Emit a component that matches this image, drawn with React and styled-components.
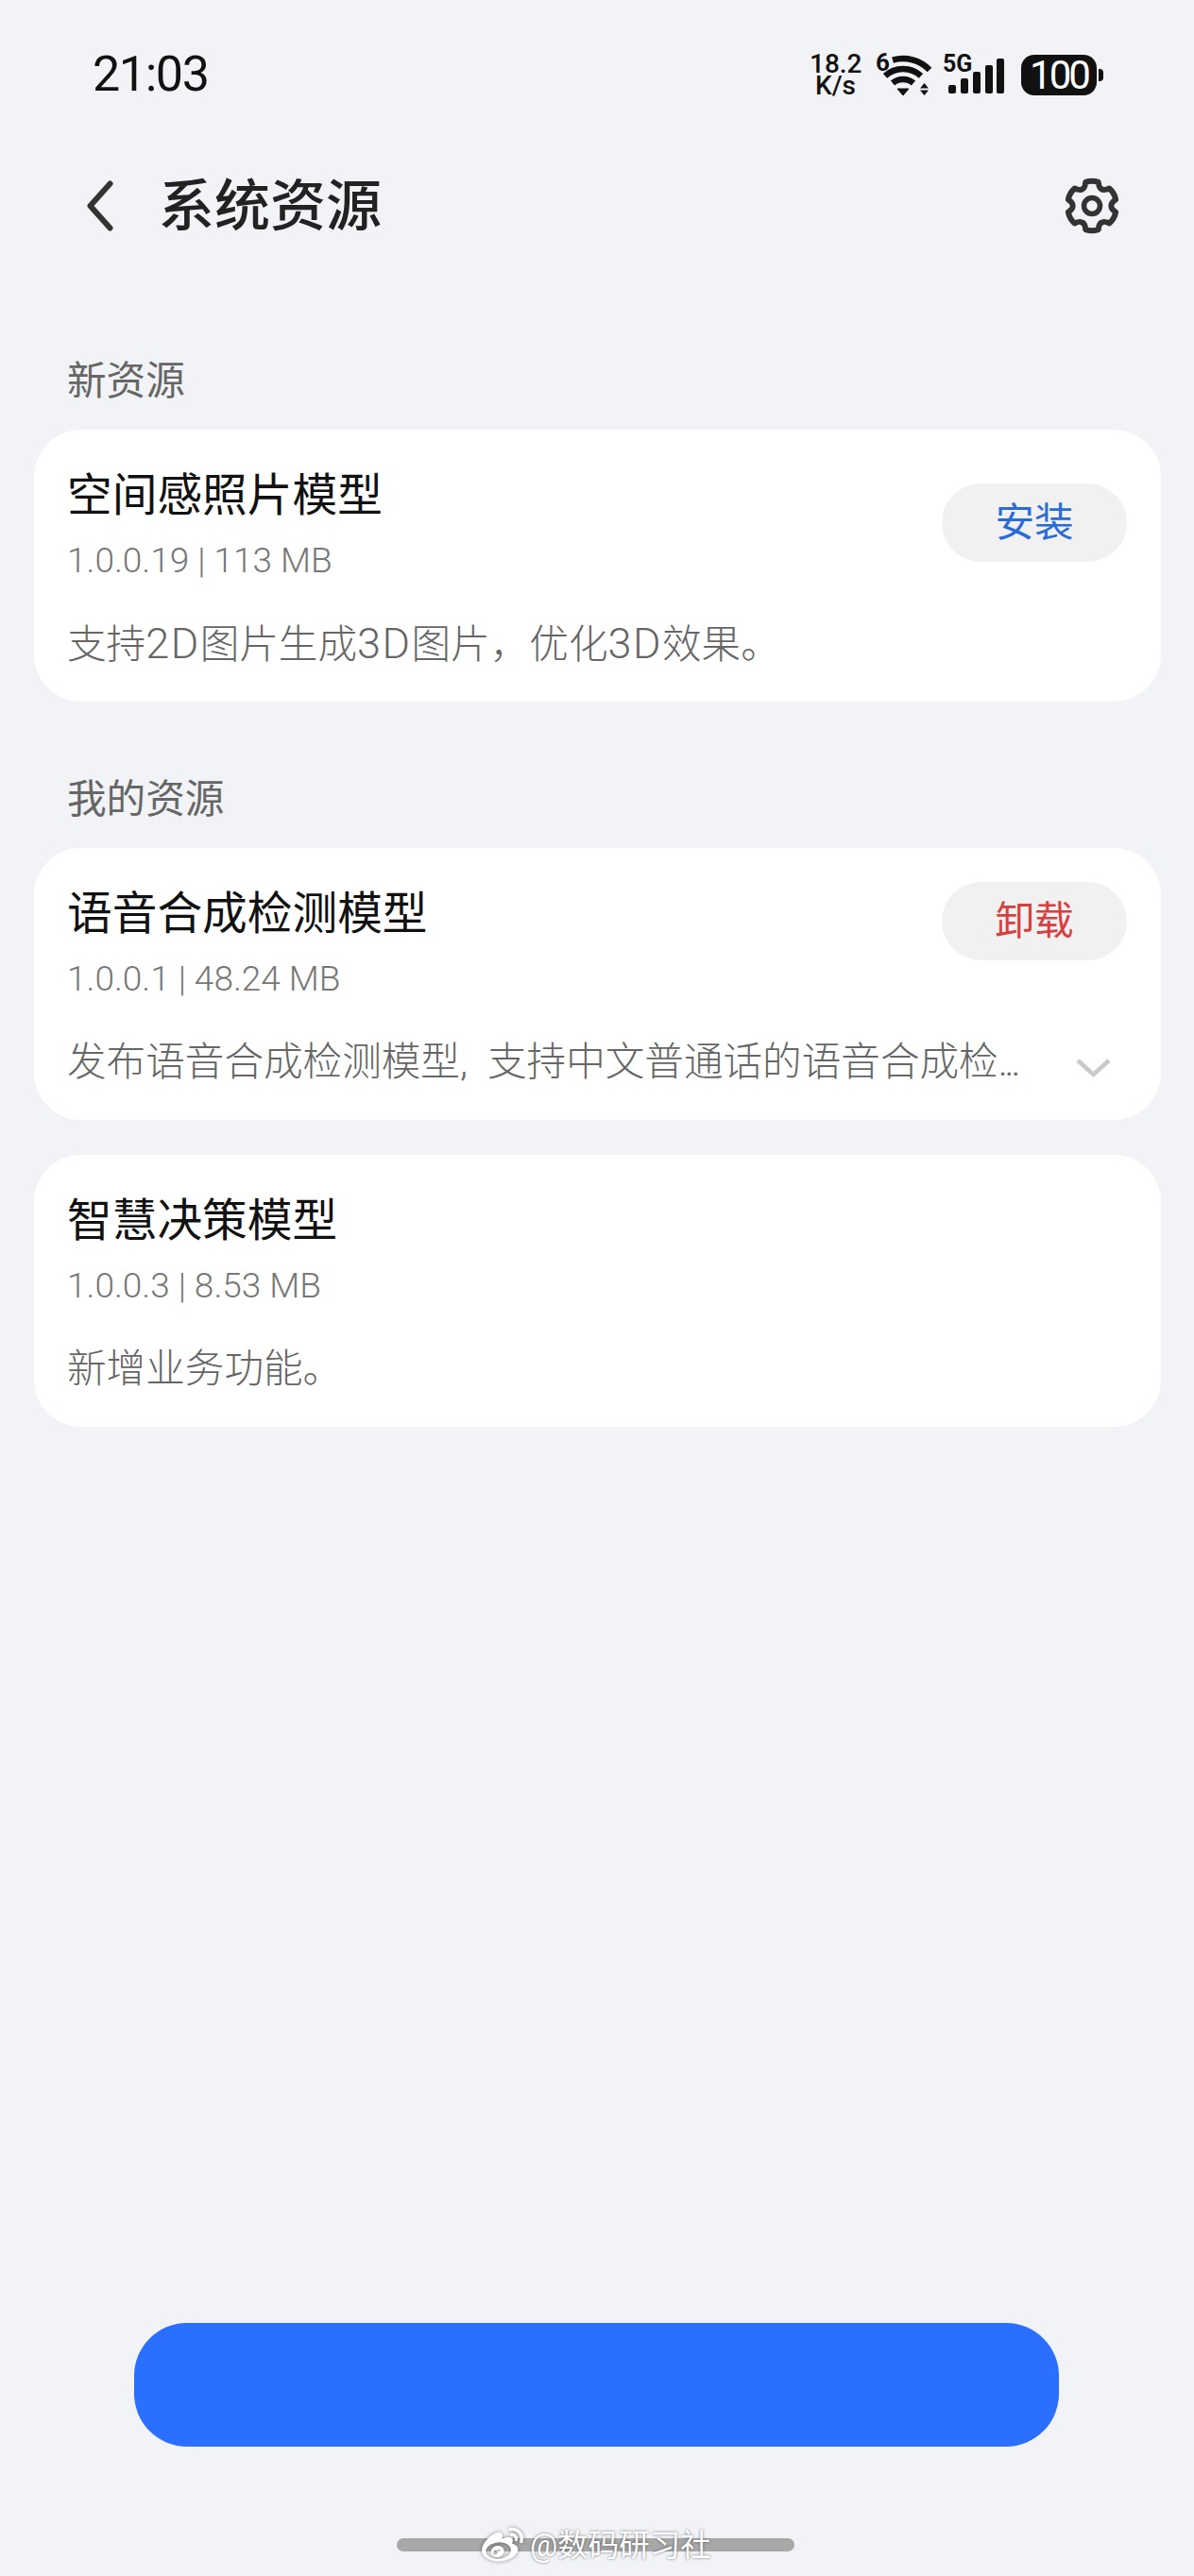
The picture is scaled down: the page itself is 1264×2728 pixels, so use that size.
import React from 'react'
import styled, { createGlobalStyle } from 'styled-components'
import { FaWeibo } from 'react-icons/fa'

const GlobalStyle = createGlobalStyle`
  html, body {
    margin: 0;
    padding: 0;
    background: #f1f3f7;
  }
  * {
    box-sizing: border-box;
  }
`

const Page = styled.div`
  position: relative;
  width: 1264px;
  height: 2728px;
  display: flex;
  flex-direction: column;
  background: #f1f3f7;
  font-family: Roboto, "Noto Sans CJK SC", sans-serif;
  overflow: hidden;
`

const StatusBar = styled.div`
  display: flex;
  justify-content: space-between;
  align-items: center;
  height: 50px;
  margin-top: 54px;
  padding: 0 96px 0 98px;
  color: #111;
`

const Time = styled.div`
  font-size: 52px;
  line-height: 50px;
  letter-spacing: -1.4px;
`

const StatusIcons = styled.div`
  display: flex;
  align-items: center;
`

const Speed = styled.div`
  width: 55px;
  font-size: 28px;
  line-height: 23px;
  font-weight: 500;
  text-align: center;
  white-space: nowrap;
`

const Wifi = styled.div`
  position: relative;
  width: 60px;
  height: 50px;
  margin-left: 15px;
`

const Signal = styled.div`
  position: relative;
  width: 65px;
  height: 50px;
  margin-left: 11px;
`

const TinyLabel = styled.span`
  position: absolute;
  left: 0;
  top: ${props => props.top}px;
  font-size: ${props => props.size}px;
  line-height: 1;
  font-weight: 700;
`

const Battery = styled.div`
  display: flex;
  align-items: center;
  margin-left: 18px;
`

const BatteryBody = styled.div`
  width: 80px;
  height: 43px;
  border-radius: 14px;
  background: #111;
  color: #fff;
  font-size: 42px;
  line-height: 43px;
  letter-spacing: -3px;
  text-align: center;
`

const BatteryNub = styled.div`
  width: 5px;
  height: 13px;
  margin-left: 2px;
  border-radius: 0 4px 4px 0;
  background: #111;
`

const Header = styled.div`
  display: flex;
  align-items: center;
  justify-content: space-between;
  height: 86px;
  margin-top: 71px;
  padding: 0 78px 0 92px;
`

const HeaderLeft = styled.div`
  display: flex;
  align-items: center;
  gap: 48px;
`

const Title = styled.h1`
  margin: 2px 0 0;
  font-size: 59px;
  line-height: 86px;
  font-weight: 500;
  color: #222;
`

const Content = styled.div`
  display: flex;
  flex-direction: column;
  margin-top: 114px;
  padding: 0 35px 0 36px;
`

const SectionLabel = styled.div`
  margin-top: ${props => props.gap || 0}px;
  padding: 1px 0 0 35px;
  height: 80px;
  font-size: 41.6px;
  line-height: 56px;
  color: #666;
`

const Card = styled.div`
  height: 288px;
  margin-bottom: ${props => props.gap || 0}px;
  padding: 40px 36px 0 35px;
  border-radius: 50px;
  background: #fff;
`

const CardHead = styled.div`
  display: flex;
  justify-content: space-between;
  align-items: flex-start;
  height: 123px;
`

const CardTitle = styled.div`
  font-size: 47.7px;
  line-height: 60px;
  color: #111;
`

const Version = styled.div`
  margin-top: 14px;
  font-size: 37px;
  line-height: 50px;
  font-weight: 300;
  color: #777;
`

const ActionButton = styled.div`
  width: 196px;
  height: 83px;
  margin-top: ${props => props.offset}px;
  border-radius: 42px;
  background: #f1f1f1;
  color: ${props => props.color};
  font-size: 41.6px;
  line-height: 83px;
  text-align: center;
`

const DescRow = styled.div`
  display: flex;
  align-items: center;
  justify-content: space-between;
  margin-top: 36px;
  padding-right: 17px;
`

const Desc = styled.div`
  font-size: 41.6px;
  line-height: 56px;
  font-weight: 300;
  color: #666;
  white-space: nowrap;
`

// latin runs in the description are drawn a bit bigger than the CJK around them
const Latin = styled.span`
  font-size: 45px;
  letter-spacing: 1.5px;
`

const Comma = styled.span`
  margin-right: 21px;
`

const Dots = styled.span`
  letter-spacing: -3px;
`

const Chevron = styled.svg`
  margin-top: 12px;
`

const Spacer = styled.div`
  flex: 1;
`

const PrimaryButton = styled.div`
  width: 979px;
  height: 131px;
  margin: 0 0 97px 142px;
  border-radius: 56px;
  background: #2a6fff;
`

const HomeBar = styled.div`
  width: 421px;
  height: 14px;
  margin: 0 0 26px 420px;
  border-radius: 7px;
  background: #a8a8a8;
`

const Watermark = styled.div`
  position: absolute;
  left: 510px;
  top: 2674px;
  display: flex;
  align-items: center;
  gap: 7px;
  color: #fff;
  font-size: 32.5px;
  line-height: 44px;
  text-shadow: 0 0 3px rgba(0, 0, 0, 0.55);

  svg {
    filter: drop-shadow(0 0 2px rgba(0, 0, 0, 0.45));
  }
`

// six lobed outline, centre 30,30
const gearPath = () => {
  const pt = (deg, r) => {
    const a = (deg * Math.PI) / 180
    return `${(30 + r * Math.cos(a)).toFixed(2)} ${(30 + r * Math.sin(a)).toFixed(2)}`
  }
  let d = ''
  for (let i = 0; i < 6; i++) {
    const a = -90 + i * 60
    d += i === 0 ? `M${pt(a - 15, 26)}` : ''
    d += ` Q${pt(a, 27.5)} ${pt(a + 15, 26)}`
    d += ` Q${pt(a + 22, 20)} ${pt(a + 30, 20.5)}`
    d += ` Q${pt(a + 38, 20)} ${pt(a + 45, 26)}`
  }
  return d + 'Z'
}

const BackIcon = () => (
  <svg width="28" height="54" viewBox="0 0 28 54" fill="none">
    <path d="M24.5 3.5 L3.5 27 L24.5 50.5" stroke="#333" strokeWidth="6" strokeLinecap="round" strokeLinejoin="round" />
  </svg>
)

const GearIcon = () => (
  <svg width="60" height="60" viewBox="0 0 60 60" fill="none" stroke="#333" strokeWidth="6">
    <path d={gearPath()} strokeLinejoin="round" />
    <circle cx="30" cy="30" r="8.5" strokeWidth="5.5" />
  </svg>
)

const WifiIcon = () => (
  <svg width="60" height="50" viewBox="0 0 60 50" fill="none">
    <g stroke="#111" strokeWidth="6.5">
      <path d="M18 9.6 A39 39 0 0 1 57 20" />
      <path d="M10 26.4 A28 28 0 0 1 48 26.4" />
      <path d="M18 34 A17 17 0 0 1 40 34" />
    </g>
    <path d="M23 40 H35 L29 47 Z" fill="#111" stroke="#111" strokeLinejoin="round" />
    <path d="M51.5 34 L56 39.5 H47 Z M47 41.5 H56 L51.5 47 Z" fill="#111" />
  </svg>
)

const SignalIcon = () => (
  <svg width="65" height="50" viewBox="0 0 65 50" fill="#111">
    <rect x="6" y="36" width="8" height="9" rx="2" />
    <rect x="19" y="29" width="8" height="16" rx="2" />
    <rect x="32" y="22" width="8" height="23" rx="2" />
    <rect x="45" y="15" width="8" height="30" rx="2" />
    <rect x="57" y="8" width="8" height="37" rx="2" />
  </svg>
)

const ChevronIcon = () => (
  <Chevron width="37" height="20" viewBox="0 0 37 20" fill="none">
    <path d="M2 2 L18.5 17 L35 2" stroke="#c9c9c9" strokeWidth="4.5" />
  </Chevron>
)

const App = () => (
  <Page>
    <GlobalStyle />
    <StatusBar>
      <Time>21:03</Time>
      <StatusIcons>
        <Speed>18.2<br />K/s</Speed>
        <Wifi>
          <WifiIcon />
          <TinyLabel top={-1} size={26}>6</TinyLabel>
        </Wifi>
        <Signal>
          <SignalIcon />
          <TinyLabel top={1} size={25}>5G</TinyLabel>
        </Signal>
        <Battery>
          <BatteryBody>100</BatteryBody>
          <BatteryNub />
        </Battery>
      </StatusIcons>
    </StatusBar>

    <Header>
      <HeaderLeft>
        <BackIcon />
        <Title>系统资源</Title>
      </HeaderLeft>
      <GearIcon />
    </Header>

    <Content>
      <SectionLabel>新资源</SectionLabel>
      <Card>
        <CardHead>
          <div>
            <CardTitle>空间感照片模型</CardTitle>
            <Version>1.0.0.19 | 113 MB</Version>
          </div>
          <ActionButton offset={17} color="#2a6bd8">安装</ActionButton>
        </CardHead>
        <DescRow>
          <Desc>支持<Latin>2D</Latin>图片生成<Latin>3D</Latin>图片，优化<Latin>3D</Latin>效果。</Desc>
        </DescRow>
      </Card>

      <SectionLabel gap={75}>我的资源</SectionLabel>
      <Card gap={37}>
        <CardHead>
          <div>
            <CardTitle>语音合成检测模型</CardTitle>
            <Version>1.0.0.1 | 48.24 MB</Version>
          </div>
          <ActionButton offset={-4} color="#d8403f">卸载</ActionButton>
        </CardHead>
        <DescRow>
          <Desc>发布语音合成检测模型<Comma>,</Comma>支持中文普通话的语音合成检<Dots>...</Dots></Desc>
          <ChevronIcon />
        </DescRow>
      </Card>
      <Card>
        <CardHead>
          <div>
            <CardTitle>智慧决策模型</CardTitle>
            <Version>1.0.0.3 | 8.53 MB</Version>
          </div>
        </CardHead>
        <DescRow>
          <Desc>新增业务功能。</Desc>
        </DescRow>
      </Card>
    </Content>

    <Spacer />
    <PrimaryButton />
    <HomeBar />
    <Watermark>
      <FaWeibo size={44} />
      <span>@数码研习社</span>
    </Watermark>
  </Page>
)

export default App
